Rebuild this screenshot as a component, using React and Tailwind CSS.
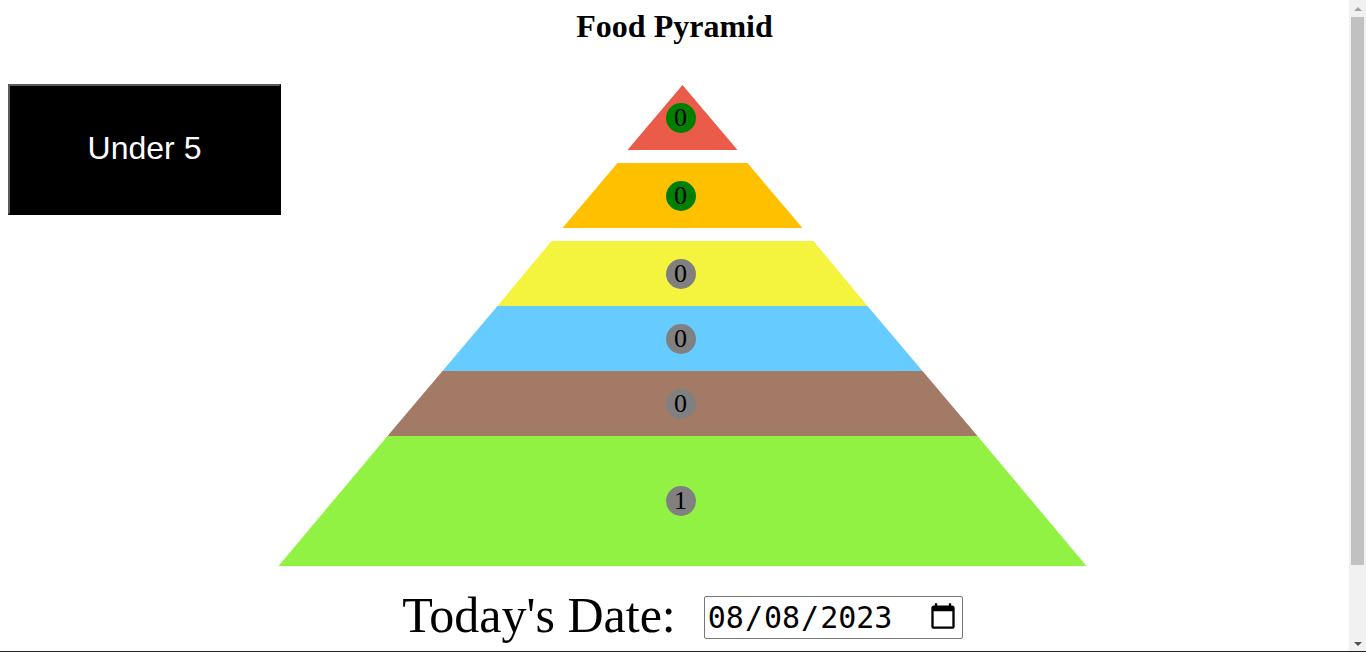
import React from "react";

const layers = [
  { color: "bg-[#eb5b4a]", width: "w-[110px]", height: "h-[65px]", clip: "[clip-path:polygon(50%_0,100%_100%,0_100%)]", count: 0, done: true, gap: "" },
  { color: "bg-[#ffc000]", width: "w-[240px]", height: "h-[65px]", clip: "[clip-path:polygon(55px_0,calc(100%_-_55px)_0,100%_100%,0_100%)]", count: 0, done: true, gap: "mt-[13px]" },
  { color: "bg-[#f4f43e]", width: "w-[370px]", height: "h-[65px]", clip: "[clip-path:polygon(54px_0,calc(100%_-_54px)_0,100%_100%,0_100%)]", count: 0, done: false, gap: "mt-[13px]" },
  { color: "bg-[#66cbff]", width: "w-[480px]", height: "h-[65px]", clip: "[clip-path:polygon(55px_0,calc(100%_-_55px)_0,100%_100%,0_100%)]", count: 0, done: false, gap: "" },
  { color: "bg-[#a27a66]", width: "w-[590px]", height: "h-[65px]", clip: "[clip-path:polygon(55px_0,calc(100%_-_55px)_0,100%_100%,0_100%)]", count: 0, done: false, gap: "" },
  { color: "bg-[#91f244]", width: "w-[808px]", height: "h-[130px]", clip: "[clip-path:polygon(109px_0,calc(100%_-_109px)_0,100%_100%,0_100%)]", count: 1, done: false, gap: "" },
];

function Layer({ layer }) {
  return (
    <div
      className={`${layer.width} ${layer.height} ${layer.color} ${layer.clip} ${layer.gap} flex items-center justify-center`}
    >
      <span
        className={`w-[30px] h-[30px] rounded-full flex items-center justify-center -translate-x-[2px] text-[26px] leading-none text-black ${
          layer.done ? "bg-[#008000]" : "bg-[#808080]"
        }`}
      >
        {layer.count}
      </span>
    </div>
  );
}

// fake classic scrollbar, the page in the shot was scrollable
function ScrollBar() {
  return (
    <div className="fixed top-0 right-0 w-[17px] h-full bg-[#f1f1f1] flex flex-col items-center">
      <div className="h-[17px] flex items-center justify-center">
        <div className="w-0 h-0 border-x-[4px] border-x-transparent border-b-[4px] border-b-[#a3a3a3]" />
      </div>
      <div className="w-[13px] h-[548px] bg-[#c1c1c1]" />
      <div className="flex-1" />
      <div className="h-[17px] flex items-center justify-center">
        <div className="w-0 h-0 border-x-[4px] border-x-transparent border-t-[4px] border-t-[#505050]" />
      </div>
    </div>
  );
}

export default function App() {
  return (
    <div className="w-[1349px] min-h-[735px] pt-2 bg-white font-['Liberation_Serif',serif] text-black">
      {/* title */}
      <h1 className="text-center text-[32px] font-bold leading-[normal]">
        Food Pyramid
      </h1>

      {/* button + pyramid share one grid cell */}
      <div className="grid mt-[39px]">
        <button className="col-start-1 row-start-1 self-start justify-self-start ml-2 w-[273px] h-[131px] pb-[4px] bg-black text-white text-[32px] font-['Liberation_Sans',sans-serif] border-2 border-black border-t-[#5a5a5a] border-l-[#5a5a5a]">
          Under 5
        </button>

        <div className="col-start-1 row-start-1 flex flex-col items-center pl-4 mt-px">
          {layers.map((layer, i) => (
            <Layer key={i} layer={layer} />
          ))}
        </div>
      </div>

      {/* date row */}
      <div className="flex items-center justify-center gap-[28px] pl-4 mt-[20px]">
        <span className="text-[50px] leading-[normal]">Today's Date:</span>
        <input
          type="date"
          defaultValue="2023-08-08"
          className="mt-1 w-[259px] h-[43px] px-[2px] border border-[#767676] rounded-[2px] bg-white text-black text-[30px] font-['DejaVu_Sans_Mono',monospace]"
        />
      </div>

      <ScrollBar />
      <div className="fixed bottom-0 left-0 right-0 h-px bg-[#222]" />
    </div>
  );
}
